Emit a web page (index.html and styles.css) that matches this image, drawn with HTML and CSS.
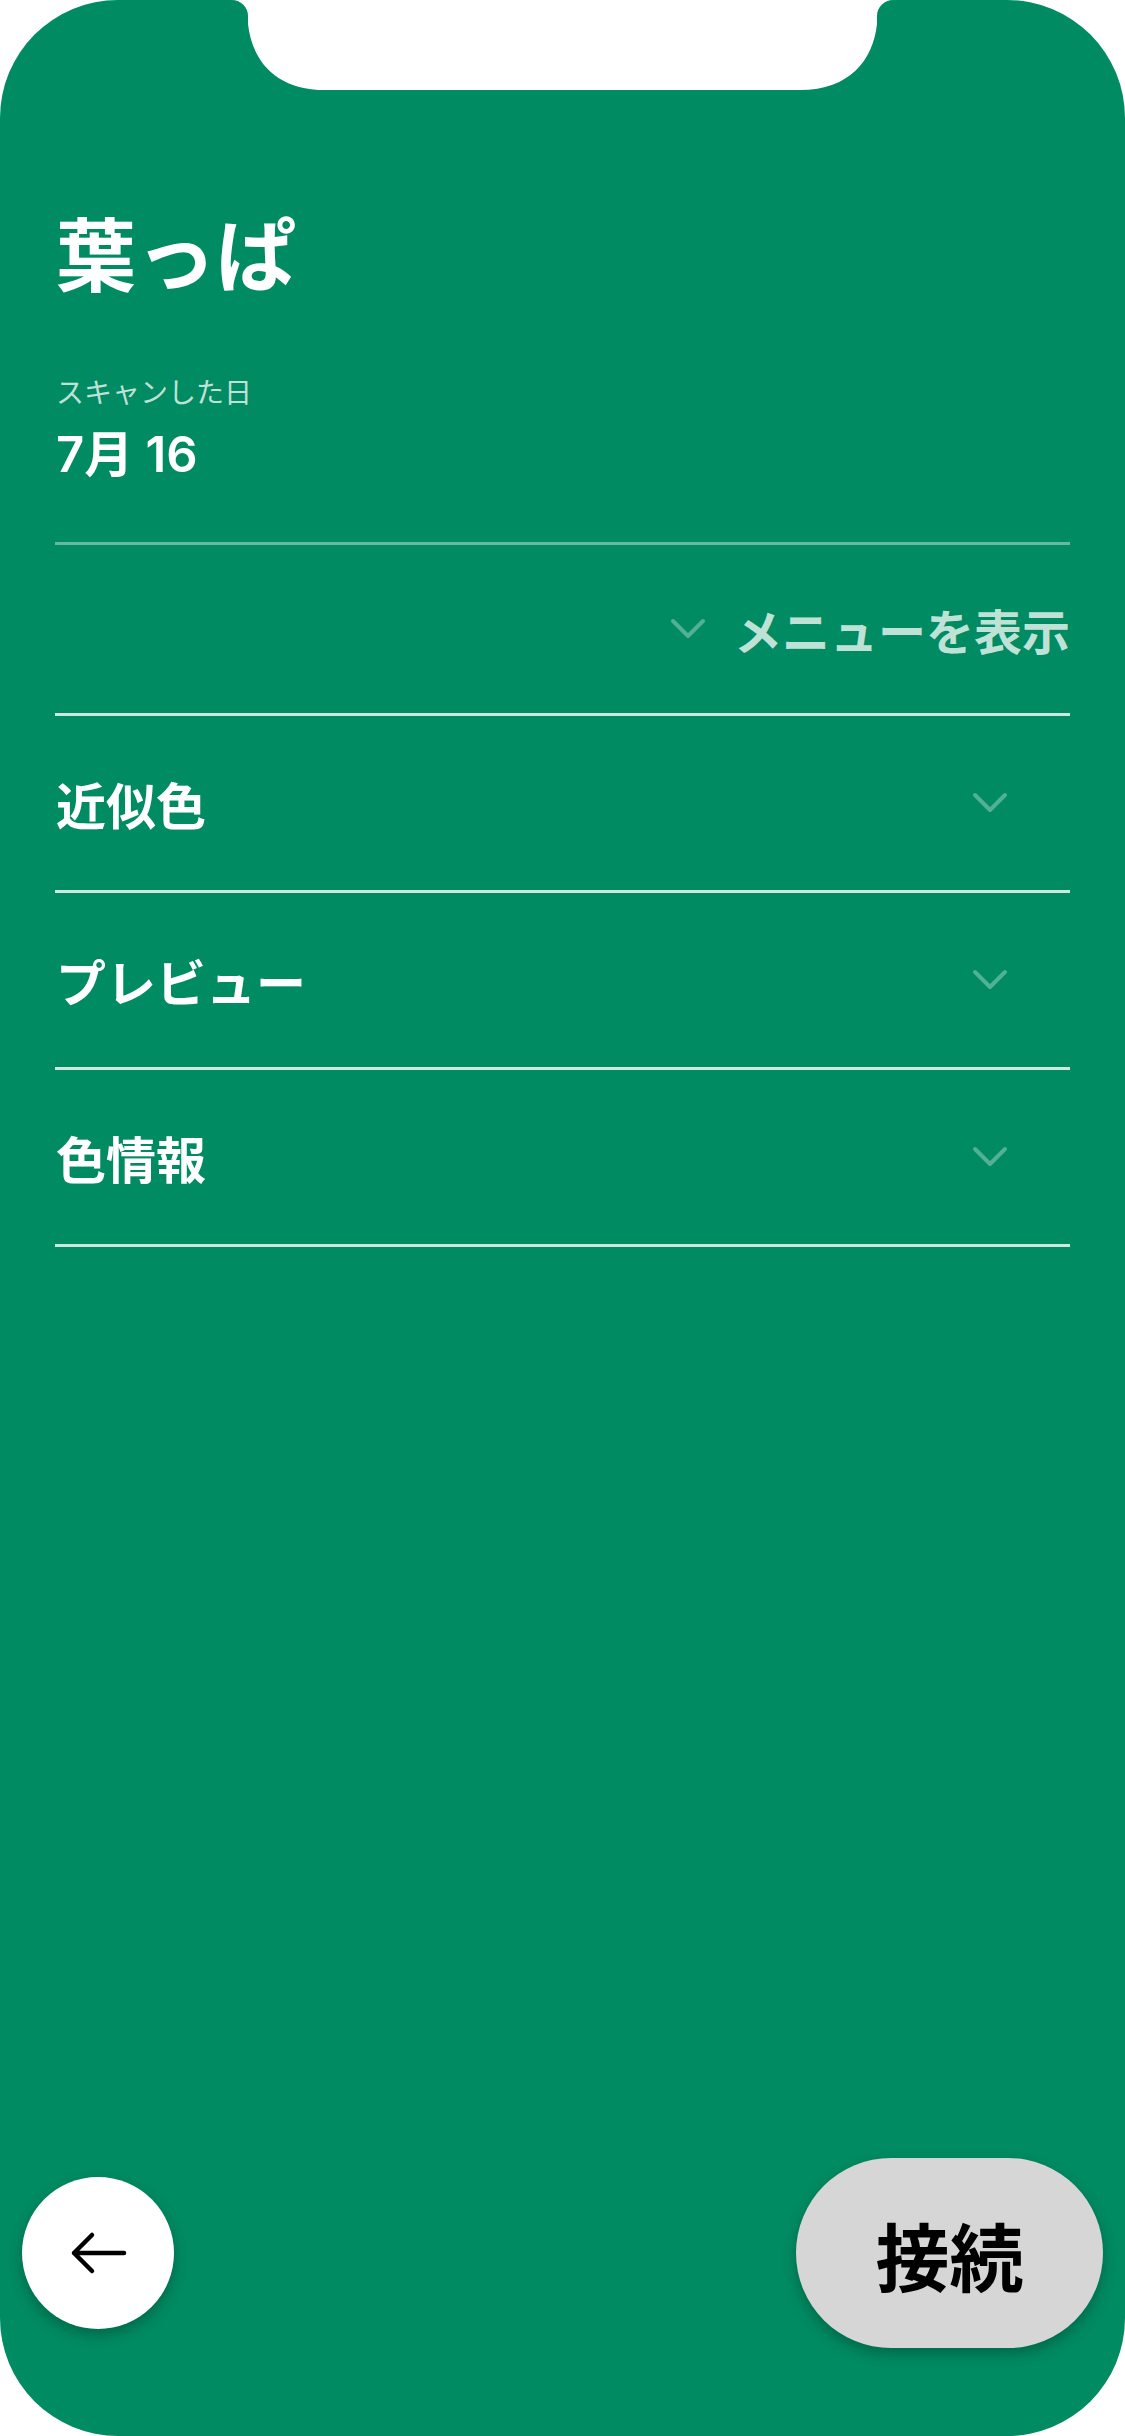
FILE: index.html
```html
<!DOCTYPE html>
<html lang="ja">
<head>
    <meta charset="UTF-8">
    <meta name="viewport" content="width=device-width, initial-scale=1.0">
    <title>葉っぱ</title>
    <link rel="stylesheet" href="styles.css">
</head>
<body>
    <div class="phone">
        <svg class="notch" width="1125" height="92" viewBox="0 0 1125 92">
            <path d="M232 0 A16 16 0 0 1 248 16 L248 24 C252 60 275 90 325 90 L800 90 C850 90 873 60 877 24 L877 16 A16 16 0 0 1 893 0 Z" fill="#fff"/>
        </svg>

        <div class="content">
            <div class="header">
                <h1 class="title">葉っぱ</h1>
                <div class="scan-label">スキャンした日</div>
                <div class="scan-date">7月 16</div>
            </div>

            <div class="menu-toggle">
                <svg class="chevron" width="36" height="22" viewBox="0 0 36 22">
                    <path d="M3 3 L18 18 L33 3"/>
                </svg>
                <span>メニューを表示</span>
            </div>

            <div class="section">
                <span class="section-title">近似色</span>
                <svg class="chevron" width="36" height="22" viewBox="0 0 36 22">
                    <path d="M3 3 L18 18 L33 3"/>
                </svg>
            </div>
            <div class="section">
                <span class="section-title">プレビュー</span>
                <svg class="chevron" width="36" height="22" viewBox="0 0 36 22">
                    <path d="M3 3 L18 18 L33 3"/>
                </svg>
            </div>
            <div class="section">
                <span class="section-title">色情報</span>
                <svg class="chevron" width="36" height="22" viewBox="0 0 36 22">
                    <path d="M3 3 L18 18 L33 3"/>
                </svg>
            </div>
        </div>

        <div class="bottom-bar">
            <button class="back-btn">
                <svg width="60" height="44" viewBox="0 0 60 44">
                    <path d="M56 22 H6 M24 4 L6 22 L24 40"/>
                </svg>
            </button>
            <button class="connect-btn">接続</button>
        </div>
    </div>
</body>
</html>
```

FILE: styles.css
```css
body {
    margin: 0;
    background-color: #fff;
    font-family: "Noto Sans CJK JP", "Noto Sans", sans-serif;
}
.phone {
    position: relative;
    width: 1125px;
    height: 2436px;
    background-color: #008b62;
    border-radius: 118px;
    display: flex;
    flex-direction: column;
    overflow: hidden;
}
.notch {
    position: absolute;
    top: 0;
    left: 0;
}
.content {
    flex: 1;
    padding: 0 55px 0 55px;
}
.header {
    padding: 210px 0 63px 1px;
    border-bottom: 3px solid rgba(255,255,255,0.4);
}
.title {
    margin: 0;
    font-size: 80px;
    line-height: 1;
    font-weight: 700;
    color: #fff;
}
.scan-label {
    margin-top: 87px;
    font-size: 28px;
    line-height: 1;
    color: rgba(255,255,255,0.75);
}
.scan-date {
    margin-top: 25px;
    font-family: "Inter", "Noto Sans CJK JP", sans-serif;
    font-size: 49px;
    line-height: 1;
    font-weight: 600;
    color: #fff;
}
.chevron path {
    fill: none;
    stroke: rgba(255,255,255,0.32);
    stroke-width: 4;
    stroke-linecap: round;
    stroke-linejoin: round;
}
.menu-toggle {
    height: 168px;
    display: flex;
    align-items: center;
    justify-content: flex-end;
    gap: 28px;
    border-bottom: 3px solid rgba(255,255,255,0.8);
    color: rgba(255,255,255,0.75);
    font-size: 48px;
    line-height: 1;
    font-weight: 700;
}
.section {
    height: 174px;
    display: flex;
    align-items: center;
    justify-content: space-between;
    padding: 0 62px 0 1px;
    border-bottom: 3px solid rgba(255,255,255,0.8);
}
.section-title {
    font-size: 50px;
    line-height: 1;
    font-weight: 700;
    color: #fff;
}
.bottom-bar {
    display: flex;
    align-items: center;
    justify-content: space-between;
    padding: 0 22px 88px;
}
.back-btn {
    width: 152px;
    height: 152px;
    border: none;
    border-radius: 50%;
    background-color: #fff;
    box-shadow: 0 6px 14px rgba(0,0,0,0.25);
    display: flex;
    align-items: center;
    justify-content: center;
    padding: 0;
}
.back-btn path {
    fill: none;
    stroke: #000;
    stroke-width: 4.5;
    stroke-linecap: round;
    stroke-linejoin: round;
}
.connect-btn {
    width: 307px;
    height: 190px;
    border: none;
    border-radius: 95px;
    background-color: #d6d6d6;
    box-shadow: 0 6px 14px rgba(0,0,0,0.25);
    font-family: "Noto Sans CJK JP", sans-serif;
    font-size: 74px;
    font-weight: 700;
    color: #000;
    padding: 0;
}
```
